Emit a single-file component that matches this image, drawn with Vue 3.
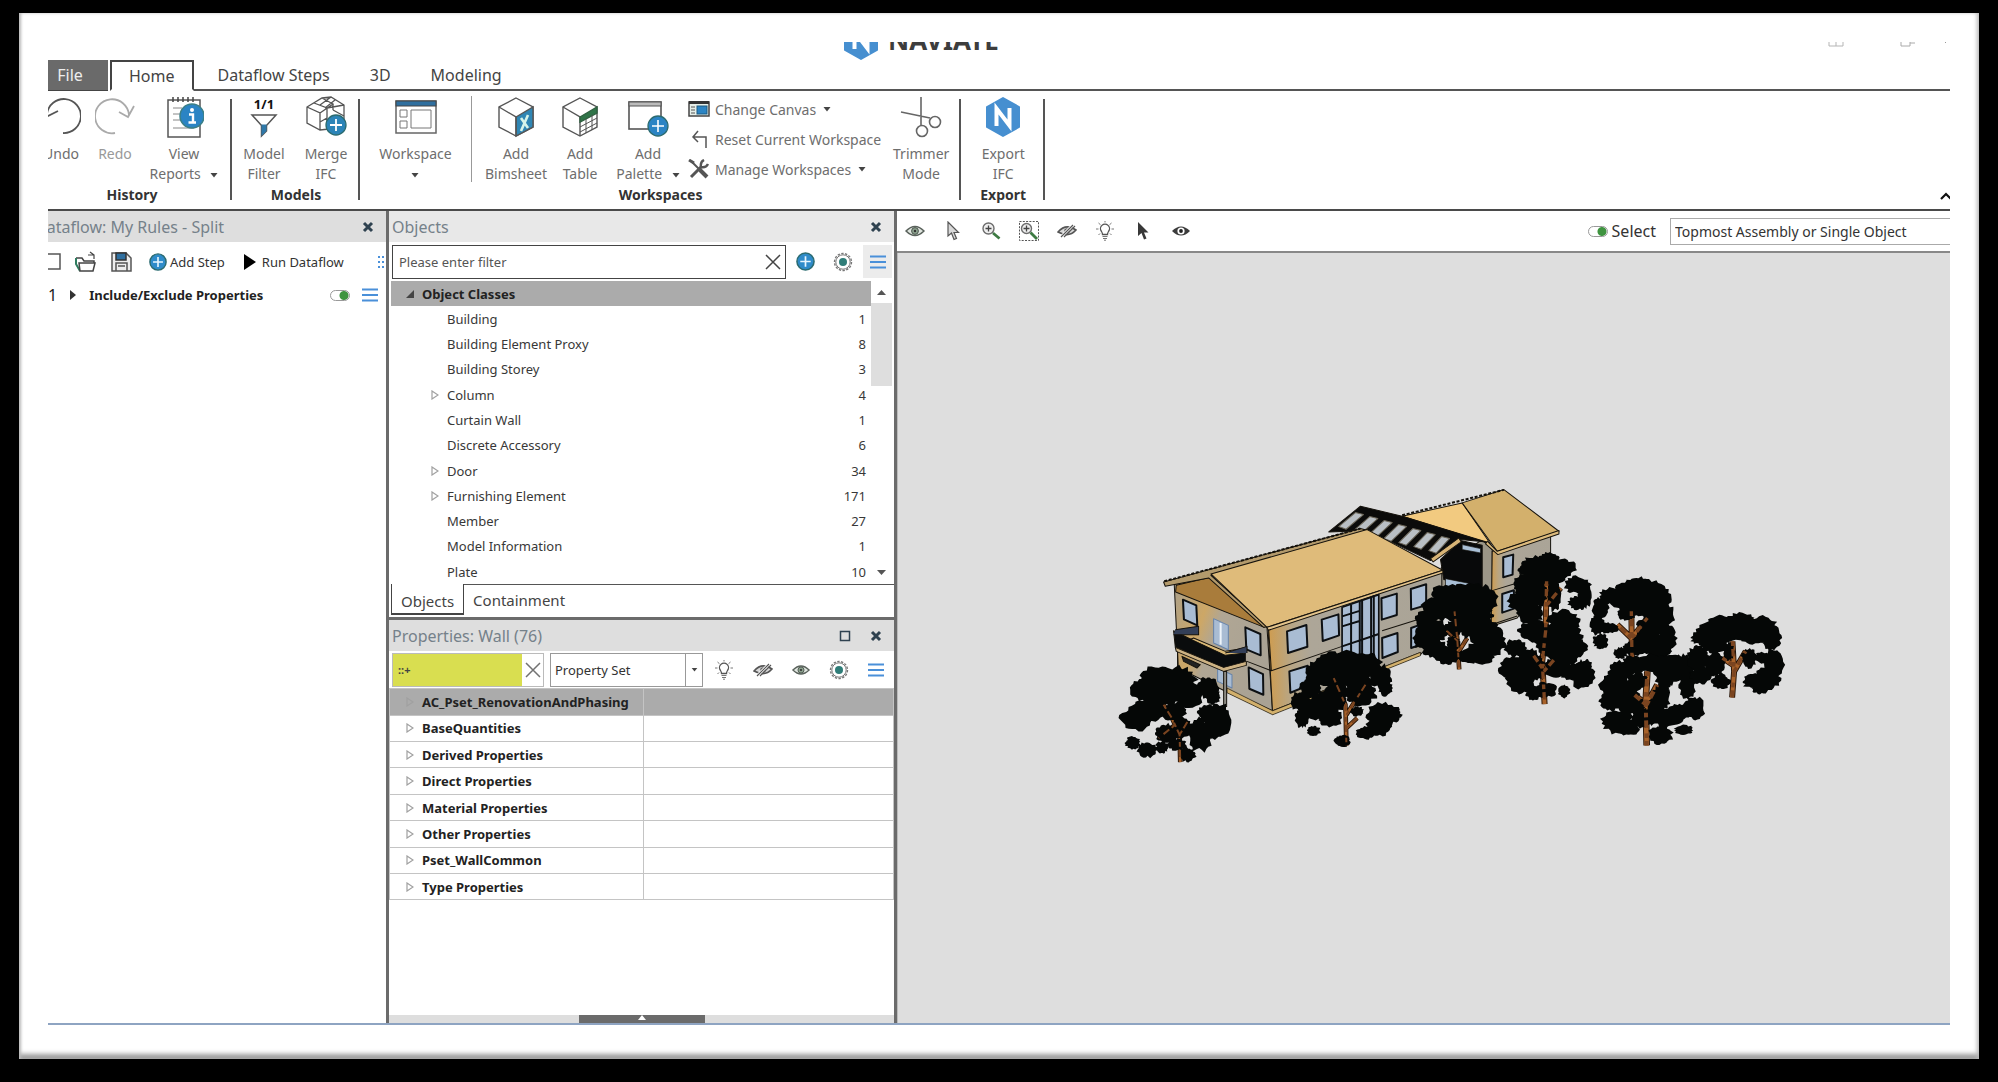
<script setup>
import { ref } from 'vue'

const ribbonTabs = ['Home', 'Dataflow Steps', '3D', 'Modeling']
const activeTab = ref('Home')

const objectClasses = [
  { name: 'Building', count: 1 },
  { name: 'Building Element Proxy', count: 8 },
  { name: 'Building Storey', count: 3 },
  { name: 'Column', count: 4, open: true },
  { name: 'Curtain Wall', count: 1 },
  { name: 'Discrete Accessory', count: 6 },
  { name: 'Door', count: 34, open: true },
  { name: 'Furnishing Element', count: 171, open: true },
  { name: 'Member', count: 27 },
  { name: 'Model Information', count: 1 },
  { name: 'Plate', count: 10 },
]

const propertySets = [
  'AC_Pset_RenovationAndPhasing',
  'BaseQuantities',
  'Derived Properties',
  'Direct Properties',
  'Material Properties',
  'Other Properties',
  'Pset_WallCommon',
  'Type Properties',
]

const viewTools = [
  ['eye', 'Show'],
  ['pointer', 'Pick'],
  ['zoom', 'Zoom in'],
  ['zoombox', 'Zoom to selection'],
  ['eyeoff', 'Hide'],
  ['bulb', 'Highlight'],
  ['pointerdark', 'Select object'],
  ['eyedark', 'Isolate'],
]

const filterText = ref('')
const propertyFilter = ref('::+')

// Leaf clumps: [x, y, rx, ry]; trunks: polylines from crown to ground.
const trees = [
  {
    trunk: 'M190 700L215 740L238 790L240 872M238 790L262 750M225 760L175 800',
    width: 14,
    leaves: [[170, 620, 48, 34], [230, 625, 55, 38], [130, 655, 42, 34], [200, 665, 60, 34], [260, 665, 48, 40], [110, 740, 46, 36], [150, 715, 46, 34], [325, 650, 30, 34], [338, 675, 22, 22], [320, 725, 26, 26], [355, 745, 38, 48], [300, 790, 36, 48], [340, 775, 34, 28], [200, 785, 34, 26], [245, 770, 28, 32], [98, 815, 22, 18], [140, 835, 28, 22], [185, 828, 18, 18], [262, 850, 24, 20], [222, 720, 34, 28], [230, 820, 26, 18]],
  },
  {
    trunk: 'M700 620L735 700L738 822M738 730L795 640M738 770L770 740',
    width: 14,
    leaves: [[690, 575, 45, 34], [745, 575, 55, 34], [800, 580, 42, 34], [650, 605, 36, 34], [700, 620, 44, 30], [840, 615, 34, 34], [855, 650, 20, 24], [760, 620, 50, 30], [630, 650, 32, 30], [600, 690, 30, 28], [650, 710, 40, 36], [690, 690, 42, 40], [605, 740, 20, 28], [690, 740, 34, 26], [780, 665, 46, 34], [715, 660, 26, 30], [850, 730, 48, 34], [880, 730, 22, 20], [835, 765, 36, 28], [795, 785, 28, 18], [640, 778, 20, 14], [725, 808, 24, 18], [770, 720, 20, 14]],
  },
  {
    trunk: 'M1062 420L1070 500L1076 594M1075 540L1100 500M1072 510L1030 470',
    width: 14,
    leaves: [[1040, 370, 45, 30], [1100, 370, 60, 34], [1150, 385, 38, 40], [1020, 410, 52, 36], [1080, 420, 50, 40], [1130, 430, 44, 28], [975, 450, 30, 34], [965, 500, 26, 34], [1010, 480, 30, 30], [1000, 530, 36, 28], [1040, 550, 36, 28], [1150, 480, 42, 44], [1180, 510, 34, 40], [1140, 545, 46, 32], [1105, 555, 28, 22], [1060, 470, 24, 24], [1060, 515, 20, 20], [1100, 470, 20, 30]],
  },
  {
    trunk: 'M1338 330L1335 480L1325 570L1332 698M1330 600L1365 560M1325 590L1290 540M1340 400L1380 350',
    width: 18,
    leaves: [[1310, 280, 46, 24], [1345, 262, 30, 18], [1380, 290, 42, 28], [1340, 310, 60, 26], [1275, 295, 22, 18], [1430, 340, 38, 24], [1450, 370, 22, 42], [1430, 395, 26, 20], [1270, 340, 34, 30], [1265, 390, 40, 34], [1290, 425, 40, 30], [1310, 365, 30, 40], [1360, 375, 20, 44], [1390, 450, 46, 34], [1300, 480, 44, 30], [1400, 500, 44, 36], [1340, 510, 38, 44], [1430, 530, 28, 26], [1245, 530, 32, 26], [1240, 590, 42, 34], [1260, 630, 42, 38], [1300, 590, 34, 40], [1285, 560, 30, 28], [1370, 590, 36, 30], [1390, 550, 46, 32], [1420, 600, 40, 26], [1445, 610, 34, 40], [1455, 590, 20, 24], [1390, 660, 18, 18], [1335, 655, 34, 22], [1300, 665, 24, 20]],
  },
  {
    trunk: 'M1592 420L1594 570M1594 500L1640 440M1592 500L1550 460',
    width: 18,
    leaves: [[1590, 355, 40, 28], [1610, 340, 36, 22], [1640, 360, 48, 34], [1680, 385, 30, 36], [1530, 375, 32, 24], [1570, 385, 40, 28], [1500, 410, 24, 32], [1630, 400, 56, 36], [1690, 430, 30, 36], [1580, 425, 28, 24], [1490, 460, 20, 30], [1500, 510, 22, 22], [1520, 470, 30, 16], [1660, 460, 46, 30], [1640, 510, 40, 40], [1700, 500, 26, 40], [1600, 530, 34, 22], [1560, 545, 20, 16], [1680, 540, 30, 20]],
  },
  {
    trunk: 'M1640 600L1635 690L1638 822M1638 700L1670 640M1636 700L1590 660',
    width: 20,
    leaves: [[1600, 580, 38, 26], [1650, 575, 50, 26], [1710, 580, 46, 32], [1750, 590, 30, 40], [1560, 600, 36, 30], [1535, 640, 36, 34], [1530, 690, 32, 28], [1570, 660, 44, 34], [1610, 630, 30, 26], [1700, 610, 40, 28], [1760, 640, 24, 44], [1780, 710, 30, 34], [1740, 720, 34, 22], [1590, 700, 44, 28], [1550, 750, 46, 34], [1580, 770, 36, 22], [1620, 740, 28, 30], [1680, 680, 28, 38], [1700, 740, 44, 26], [1680, 790, 34, 28], [1750, 775, 28, 14], [1660, 720, 22, 40], [1690, 640, 20, 16]],
  },
  {
    trunk: 'M1895 510L1900 600L1894 678M1900 600L1935 540M1896 580L1865 560',
    width: 18,
    leaves: [[1860, 455, 38, 24], [1920, 450, 40, 24], [1980, 465, 46, 30], [1830, 485, 48, 30], [1800, 500, 28, 20], [2010, 500, 30, 36], [1900, 480, 60, 30], [1960, 495, 40, 22], [1840, 520, 40, 24], [1790, 560, 30, 34], [1800, 610, 32, 26], [1840, 580, 30, 36], [1860, 630, 26, 22], [2020, 580, 28, 44], [2000, 620, 38, 34], [1960, 630, 34, 22], [1945, 560, 22, 30], [1985, 560, 24, 16], [1980, 650, 26, 16], [1885, 540, 16, 26]],
  },
]

function clump([cx, cy, rx, ry], seed) {
  let s = seed * 7919 + cx * 31 + cy * 17
  const next = () => {
    s = (s * 1103515245 + 12345) % 2147483648
    return s / 2147483648
  }
  const steps = 30
  let d = ''
  for (let i = 0; i < steps; i++) {
    const a = (i / steps) * Math.PI * 2
    const k = 0.84 + next() * 0.36
    d += (i ? 'L' : 'M') + Math.round(cx + Math.cos(a) * rx * k) + ' ' + Math.round(cy + Math.sin(a) * ry * k)
  }
  return d + 'Z'
}
const crowns = trees.map((t, i) => ({ ...t, d: t.leaves.map((l) => clump(l, i + 1)).join('') }))

// Window openings as skewed quads.
const leftWindows = [
  'M248 385L288 402L291 462L251 444Z',
  'M435 468L480 488L481 552L438 534Z',
  'M445 588L488 608L489 670L447 652Z',
]
const rightWindows = [
  'M560 480L618 461L621 526L563 545Z',
  'M664 445L714 429L716 492L667 509Z',
  'M843 381L889 367L889 431L844 445Z',
  'M931 353L977 339L977 402L932 415Z',
  'M567 600L622 583L624 642L570 664Z',
  'M845 500L891 485L892 542L846 560Z',
  'M932 470L960 460L960 520L932 530Z',
  'M1208 258L1238 250L1236 310L1208 318Z',
  'M1205 368L1240 357L1240 412L1205 424Z',
]
const rafters = [0, 1, 2, 3, 4, 5, 6].map((i) => {
  const x = 765 + i * 43
  const y = 124 + i * 12
  return `M${x} ${y}L${x + 24} ${y + 6}L${x - 28 + i * 2} ${y + 50}L${x - 50 + i * 2} ${y + 42}Z`
})
</script>

<template>
  <div class="stage">
    <svg class="sprite" aria-hidden="true">
      <symbol id="close" viewBox="0 0 12 12"><path d="M2 2L10 10M10 2L2 10" stroke="#2f4250" stroke-width="3" /></symbol>
      <symbol id="thinx" viewBox="0 0 16 16"><path d="M1 1L15 15M15 1L1 15" stroke="#444" stroke-width="1.5" /></symbol>
      <symbol id="plus" viewBox="0 0 20 20"><circle cx="10" cy="10" r="9" fill="#2f8bc9" stroke="#2b6b70" stroke-width="1.6" /><path d="M10 4.500V15.500M4.500 10H15.500" stroke="#e8f6ff" stroke-width="1.800" /></symbol>
      <symbol id="menu" viewBox="0 0 16 14"><path d="M0 1.500H16M0 7H16M0 12.500H16" stroke="#4a90d9" stroke-width="2.200" /></symbol>
      <symbol id="gear" viewBox="0 0 20 20"><circle cx="10" cy="10" r="8.500" fill="none" stroke="#777" stroke-width="1.400" stroke-dasharray="2.400 1.400" /><circle cx="10" cy="10" r="7.200" fill="none" stroke="#777" /><circle cx="10" cy="10" r="4" fill="#2f7d78" /></symbol>
      <symbol id="eye" viewBox="0 0 20 12"><path d="M1 6Q10 -3 19 6Q10 15 1 6Z" fill="#dfe5df" stroke="#5a625c" stroke-width="1.500" /><circle cx="10" cy="6" r="3.400" fill="#8aa08c" stroke="#4c554e" /><circle cx="10" cy="6" r="1.200" fill="#333" /></symbol>
      <symbol id="eyedark" viewBox="0 0 20 12"><path d="M1 6Q10 -3 19 6Q10 15 1 6Z" fill="#3c3c3c" /><circle cx="10" cy="6" r="3.600" fill="#fff" /><circle cx="10" cy="6" r="1.900" fill="#222" /></symbol>
      <symbol id="eyeoff" viewBox="0 0 20 14"><path d="M1 8Q9 -1 19 6Q12 14 1 8Z" fill="#d8d8d8" stroke="#555" stroke-width="1.600" /><circle cx="10" cy="7" r="2.800" fill="#666" /><path d="M4 13L16 1" stroke="#fff" stroke-width="3" /><path d="M4 13L16 1M7 13L18 2" stroke="#555" stroke-width="1.200" /></symbol>
      <symbol id="bulb" viewBox="0 0 20 20"><path d="M7.500 13.500Q7.500 12 6.500 10.500A4.500 4.500 0 1 1 13.500 10.500Q12.500 12 12.500 13.500Z" fill="none" stroke="#555" stroke-width="1.300" /><path d="M7.500 15.500H12.500M8 17.500H12M9 19.200H11M1 8H3.500M16.500 8H19M3.500 2L5.500 3.800M16.500 2L14.500 3.800M3.500 14L5 12.500M16.500 14L15 12.500M10 0V1.500" stroke="#777" /></symbol>
      <symbol id="pointer" viewBox="0 0 14 20"><path d="M2 1V15L5.500 12L8 18.500L10.500 17.500L8 11.500H12.500Z" fill="#d9d9d9" stroke="#555" stroke-width="1.200" /></symbol>
      <symbol id="pointerdark" viewBox="0 0 14 20"><path d="M2 1V15L5.500 12L8 18.500L10.500 17.500L8 11.500H12.500Z" fill="#383838" /></symbol>
      <symbol id="zoom" viewBox="0 0 20 20"><circle cx="7.500" cy="7.500" r="5.500" fill="#eee" stroke="#6d6d6d" stroke-width="1.400" /><path d="M7.500 4.500V10.500M4.500 7.500H10.500" stroke="#444" stroke-width="1.300" /><path d="M12 12L18.500 17.500" stroke="#3d7a42" stroke-width="2.800" /></symbol>
      <symbol id="zoombox" viewBox="0 0 20 20"><rect x=".5" y=".5" width="19" height="19" fill="none" stroke="#555" stroke-dasharray="2 1.300" /><circle cx="7.500" cy="7.500" r="5" fill="#eee" stroke="#6d6d6d" stroke-width="1.400" /><path d="M7.500 4.500V10.500M4.500 7.500H10.500" stroke="#444" stroke-width="1.300" /><path d="M11.500 11.500L18 18" stroke="#3d7a42" stroke-width="2.800" /></symbol>
      <symbol id="tri" viewBox="0 0 8 10"><path d="M1 1L7 5L1 9Z" fill="none" stroke="#a0a0a0" stroke-width="1.200" /></symbol>
      <symbol id="down" viewBox="0 0 8 5"><path d="M0.500 0H7.500L4 4.500Z" fill="#444" /></symbol>
      <symbol id="hex" viewBox="0 0 36 40"><path d="M18 1L34 10V30L18 39L2 30V10Z" fill="#468fd0" stroke="#468fd0" stroke-width="2" stroke-linejoin="round" /><path d="M11.500 29V11.500L24.500 28.500V11" fill="none" stroke="#fff" stroke-width="4" /></symbol>
    </svg>

    <main class="frame">
      <div class="crop">
        <div class="app">
          <header class="titlebar">
            <div class="brand">
              <svg width="36" height="40"><use href="#hex" /></svg>
              <span>NAVIATE</span>
            </div>
            <div class="winbtns">
              <button aria-label="Minimize"><svg width="16" height="14"><path d="M1 5V13H15V5M8 9V13" fill="none" stroke="#b5b5b5" /></svg></button>
              <button aria-label="Restore"><svg width="16" height="14"><path d="M1 5V13H10V5M10 10H15" fill="none" stroke="#aaa" /></svg></button>
              <button class="shut" aria-label="Close window"><svg width="12" height="14"><path d="M1 10L8 3M8 10L1 3" stroke="#999" /></svg></button>
            </div>
          </header>

          <nav class="tabs">
            <button class="file">File</button>
            <button v-for="t in ribbonTabs" :key="t" :class="['tab', { on: t === activeTab }]" @click="activeTab = t">{{ t }}</button>
            <span class="rule"></span>
          </nav>

          <section class="ribbon">
            <div class="group">
              <div class="tools">
                <button class="tool w-s">
                  <svg width="40" height="42" fill="none" stroke="#555" stroke-width="1.800"><path d="M6 18A17 17 0 1 1 22 37M3 10L5 21L17 15" /></svg>
                  <span>Undo</span>
                </button>
                <button class="tool w-s pale">
                  <svg width="40" height="42" fill="none" stroke="#aaa" stroke-width="1.800"><path d="M20 37A17 17 0 1 1 34 19M24 16L33 21L39 10" /></svg>
                  <span>Redo</span>
                </button>
                <button class="tool w-l">
                  <svg width="40" height="42"><rect x="4" y="4" width="32" height="37" fill="#fff" stroke="#555" stroke-width="1.500" /><path d="M9 1V6M14 1V6M19 1V6M24 1V6M29 1V6" stroke="#444" stroke-width="1.500" /><path d="M9 12H18M9 18H16M9 24H18M9 32H30" stroke="#888" /><circle cx="28" cy="20" r="12" fill="#2b84c4" stroke="#3b7f86" stroke-width="1.500" /><circle cx="28" cy="14" r="2" fill="#fff" /><path d="M25 18.500H29V26M24.500 26.500H32" fill="none" stroke="#fff" stroke-width="2.400" /></svg>
                  <span>View<br />Reports <svg class="car" width="8" height="5"><use href="#down" /></svg></span>
                </button>
              </div>
              <h2>History</h2>
            </div>

            <div class="group">
              <div class="tools">
                <button class="tool w-m">
                  <b class="ratio">1/1</b>
                  <svg width="28" height="26"><path d="M2 3H26L16.500 13.500V19L11.500 24V13.500Z" fill="#fff" stroke="#555" stroke-width="1.500" /><path d="M11.500 12.500H16.500V19L11.500 24Z" fill="#2f78a8" /></svg>
                  <span>Model<br />Filter</span>
                </button>
                <button class="tool w-g">
                  <svg width="42" height="42" fill="none" stroke="#555" stroke-width="1.300"><path d="M2 11L17 2L26 1L39 9V28L24 33L15 34L2 27ZM2 11L15 17V34M15 17L28 8L17 2M9 7L22 12V31M22 12L39 9M28 8V14M15 9L26 1M30 4L20 12M15 26L22 22M28 14L39 20" /><circle cx="31" cy="29" r="10" fill="#2b84b8" stroke="#2b6b70" /><path d="M31 23V35M25 29H37" stroke="#fff" stroke-width="1.800" /></svg>
                  <span>Merge<br />IFC</span>
                </button>
              </div>
              <h2>Models</h2>
            </div>

            <div class="group">
              <div class="tools">
                <button class="tool w-xl thinline">
                  <svg width="42" height="42"><rect x="1" y="5" width="40" height="32" fill="#fff" stroke="#666" stroke-width="1.500" /><rect x="1" y="5" width="40" height="5" fill="#2f6f9f" stroke="#444" /><path d="M5 14H12V21H5ZM5 25H12V32H5ZM16 14H36V32H16Z" fill="none" stroke="#777" /></svg>
                  <span>Workspace<br /><svg class="car alone" width="8" height="5"><use href="#down" /></svg></span>
                </button>
                <button class="tool w-m">
                  <svg width="38" height="42" stroke="#555" stroke-width="1.400"><path d="M19 2L36 11V31L19 40L2 31V11Z" fill="#fff" /><path d="M19 21L36 11V31L19 40Z" fill="#2f86b4" /><path d="M2 11L19 21V40" fill="none" /><path d="M24 22L31 32M31 19L24 35" stroke="#d7f4ea" stroke-width="2.600" /></svg>
                  <span>Add<br />Bimsheet</span>
                </button>
                <button class="tool w-m">
                  <svg width="38" height="42" stroke="#555" stroke-width="1.400"><path d="M19 2L36 11V31L19 40L2 31V11Z" fill="#fff" /><path d="M2 11L19 21V40" fill="none" /><path d="M19 21L36 11V17L19 26Z" fill="#2f7448" stroke="#2f6040" /><path d="M19 31L36 22M19 36L36 27M25 23V37M31 19V34" fill="none" stroke-width="1" /></svg>
                  <span>Add<br />Table</span>
                </button>
                <button class="tool w-p">
                  <svg width="42" height="42"><rect x="2" y="6" width="32" height="27" fill="#fff" stroke="#555" stroke-width="1.600" /><rect x="2" y="6" width="32" height="4" fill="#bbb" stroke="#555" /><circle cx="31" cy="30" r="10" fill="#2b84c4" stroke="#2b6b70" stroke-width="1.300" /><path d="M31 24V36M25 30H37" stroke="#fff" stroke-width="1.600" /></svg>
                  <span>Add<br />Palette <svg class="car" width="8" height="5"><use href="#down" /></svg></span>
                </button>
                <div class="stack">
                  <button>
                    <svg width="22" height="20"><rect x="1" y="3" width="20" height="14" fill="#e6efe9" stroke="#444" stroke-width="1.500" /><rect x="1" y="2" width="20" height="3" fill="#333" /><rect x="9" y="7" width="10" height="8" fill="#2b84c4" stroke="#1d5a80" /><path d="M3 8H7M3 11H7M3 14H7" stroke="#555" /></svg>
                    Change Canvas <svg class="car" width="8" height="5"><use href="#down" /></svg>
                  </button>
                  <button>
                    <svg width="22" height="20" fill="none" stroke="#555" stroke-width="1.500"><path d="M10 2L5 8L10 13M5 8H18V19" /></svg>
                    Reset Current Workspace
                  </button>
                  <button>
                    <svg width="22" height="20" fill="none" stroke="#555"><path d="M3 2L13 12" stroke-width="2" /><path d="M12 11L19 18" stroke-width="4" /><path d="M3 18L14 7" stroke-width="3" /><path d="M16 1Q12 3 13 8Q18 9 20 5" stroke-width="2.400" /><path d="M1 1L6 4" stroke-width="3" /></svg>
                    Manage Workspaces <svg class="car" width="8" height="5"><use href="#down" /></svg>
                  </button>
                </div>
                <button class="tool w-t">
                  <svg width="42" height="42" fill="none" stroke="#666" stroke-width="1.600"><path d="M21 1V30M1 16L30 22" /><circle cx="22" cy="35" r="5.500" /><circle cx="35" cy="26" r="5.500" /></svg>
                  <span>Trimmer<br />Mode</span>
                </button>
              </div>
              <h2>Workspaces</h2>
            </div>

            <div class="group">
              <div class="tools">
                <button class="tool w-e">
                  <svg width="36" height="40"><use href="#hex" /></svg>
                  <span>Export<br />IFC</span>
                </button>
              </div>
              <h2>Export</h2>
            </div>
            <button class="collapse" aria-label="Collapse ribbon"><svg width="12" height="8"><path d="M1 7L6 2L11 7" fill="none" stroke="#111" stroke-width="2.200" /></svg></button>
          </section>

          <div class="work">
            <section class="dataflow">
              <div class="head dark"><h3>Dataflow: My Rules - Split</h3><button aria-label="Close dataflow"><svg width="12" height="12"><use href="#close" /></svg></button></div>
              <div class="dfbar">
                <button aria-label="New"><svg width="20" height="20"><path d="M1 2H18V17H1Z" fill="#fff" stroke="#555" stroke-width="1.500" /></svg></button>
                <button aria-label="Open"><svg width="22" height="22" fill="none" stroke="#444" stroke-width="1.500"><path d="M1 7H7L9 10H19V12" /><path d="M1 7V13L5 20" stroke="#2f7d60" stroke-width="2" /><path d="M4 12H20L18 20H5Z" fill="#fff" /><path d="M13 4H19V8M15 1L19 4" stroke-width="1.200" /></svg></button>
                <button aria-label="Save"><svg width="22" height="22" stroke="#555" stroke-width="1.500"><path d="M2 2H16L21 7V20H2Z" fill="#eee" /><rect x="6" y="2" width="10" height="7" fill="#2f6f9f" stroke="#333" /><path d="M6 20V12H17V20M8 15H15" fill="none" /></svg></button>
                <button class="lbl"><svg width="18" height="18"><use href="#plus" /></svg>Add Step</button>
                <button class="lbl run"><svg width="14" height="18"><path d="M1 1L13 9L1 17Z" fill="#000" /></svg>Run Dataflow</button>
                <button class="dots" aria-label="More"><svg width="6" height="14"><path d="M1 1V3M1 6V8M1 11V13M5 1V3M5 6V8M5 11V13" stroke="#4a90d9" stroke-width="2" /></svg></button>
              </div>
              <div class="step">
                <span class="num">1</span>
                <svg width="8" height="12"><path d="M1 1L7 6L1 11Z" fill="#333" /></svg>
                <b>Include/Exclude Properties</b>
                <input type="checkbox" class="toggle" checked aria-label="Enable step" />
                <button aria-label="Step menu"><svg width="16" height="14"><use href="#menu" /></svg></button>
              </div>
            </section>

            <div class="split"></div>

            <div class="middle">
              <section class="panel">
                <div class="head"><h3>Objects</h3><button aria-label="Close objects"><svg width="12" height="12"><use href="#close" /></svg></button></div>
                <div class="filterbar">
                  <div class="field">
                    <input v-model="filterText" type="text" placeholder="Please enter filter" aria-label="Object filter" />
                    <button aria-label="Clear filter"><svg width="16" height="16"><use href="#thinx" /></svg></button>
                  </div>
                  <button aria-label="Add filter"><svg width="19" height="19"><use href="#plus" /></svg></button>
                  <button aria-label="Settings"><svg width="20" height="20"><use href="#gear" /></svg></button>
                  <button class="shade" aria-label="Menu"><svg width="16" height="14"><use href="#menu" /></svg></button>
                </div>
                <div class="treewrap">
                  <ul class="tree">
                    <li class="root"><svg width="8" height="8"><path d="M8 0V8H0Z" fill="#444" /></svg><b>Object Classes</b></li>
                    <li v-for="o in objectClasses" :key="o.name">
                      <span class="twist"><svg v-if="o.open" width="8" height="10"><use href="#tri" /></svg></span>
                      <span>{{ o.name }}</span><span class="count">{{ o.count }}</span>
                    </li>
                  </ul>
                  <div class="scroll">
                    <svg width="9" height="5"><path d="M0 5H9L4.500 0Z" fill="#555" /></svg>
                    <i class="thumb"></i>
                    <svg width="9" height="5"><path d="M0 0H9L4.500 5Z" fill="#555" /></svg>
                  </div>
                </div>
                <div class="bottomtabs">
                  <button class="on">Objects</button>
                  <button>Containment</button>
                </div>
              </section>

              <div class="hsplit"></div>

              <section class="panel">
                <div class="head dark"><h3>Properties: Wall (76)</h3>
                  <button aria-label="Maximize"><svg width="12" height="12"><rect x="1.500" y="1.500" width="9" height="9" fill="none" stroke="#2f4250" stroke-width="1.500" /></svg></button>
                  <button aria-label="Close properties"><svg width="12" height="12"><use href="#close" /></svg></button>
                </div>
                <div class="propbar">
                  <div class="yellow">
                    <input v-model="propertyFilter" type="text" aria-label="Property filter" />
                    <button aria-label="Clear property filter"><svg width="16" height="16" opacity=".75"><use href="#thinx" /></svg></button>
                  </div>
                  <div class="combo">
                    <select aria-label="Group by"><option>Property Set</option></select>
                    <span><svg width="7" height="4"><use href="#down" /></svg></span>
                  </div>
                  <div class="propicons">
                    <button aria-label="Highlight"><svg width="20" height="20"><use href="#bulb" /></svg></button>
                    <button aria-label="Hide"><svg width="20" height="14"><use href="#eyeoff" /></svg></button>
                    <button aria-label="Show"><svg width="18" height="12"><use href="#eye" /></svg></button>
                    <button aria-label="Settings"><svg width="20" height="20"><use href="#gear" /></svg></button>
                    <button aria-label="Menu"><svg width="16" height="14"><use href="#menu" /></svg></button>
                  </div>
                </div>
                <table class="props">
                  <tbody>
                    <tr v-for="(p, i) in propertySets" :key="p" :class="{ sel: i === 0 }">
                      <th scope="row"><svg width="8" height="10"><use href="#tri" /></svg>{{ p }}</th>
                      <td></td>
                    </tr>
                  </tbody>
                </table>
                <div class="grip"><i><svg width="8" height="5"><path d="M0 5H8L4 0Z" fill="#fff" /></svg></i></div>
              </section>
            </div>

            <div class="split"></div>

            <section class="viewer">
              <div class="viewbar">
                <button v-for="[id, label] in viewTools" :key="id" :aria-label="label"><svg width="20" height="20"><use :href="'#' + id" /></svg></button>
                <label class="pick"><input type="checkbox" class="toggle" checked />Select</label>
                <select aria-label="Selection level"><option>Topmost Assembly or Single Object</option></select>
              </div>
              <div class="canvas">
                <svg viewBox="-606 -654 3225 2307" role="img" aria-label="3D model view" stroke-linejoin="round">
                  <defs>
                    <linearGradient id="wallR"><stop offset="0" stop-color="#cf9c4e" /><stop offset=".13" stop-color="#b8a685" /><stop offset=".25" stop-color="#ada698" /><stop offset="1" stop-color="#aaa497" /></linearGradient>
                    <linearGradient id="wallL" x2="1" y2=".5"><stop offset="0" stop-color="#a89f8d" /><stop offset=".35" stop-color="#cda766" /><stop offset=".5" stop-color="#b0a694" /><stop offset="1" stop-color="#a9a294" /></linearGradient>
                  </defs>
                  <g stroke="#15120c" stroke-width="3">
                    <path d="M1145 205L1175 235V470L1022 430V290Z" fill="#9c9687" />
                    <path d="M1175 240L1350 188V300L1250 440L1172 465Z" fill="url(#wallR)" />
                    <path d="M1175 358L1240 338M1172 460L1250 434" fill="none" />
                    <path d="M1020 265L1080 208L1145 222V350L1030 325Z" fill="#08090a" />
                    <path d="M1035 322L1100 335L1142 350L1140 365L1035 345ZM1085 220L1140 232V245L1085 235Z" fill="#a9bfd6" stroke-width="2" />
                    <path d="M905 135L1085 95L1185 240L1155 213Z" fill="#f2ca80" />
                    <path d="M1085 95L1210 55L1375 180L1190 240Z" fill="#d3b06c" />
                    <path d="M1190 240L1375 178V188L1192 250L1155 218L1160 210Z" fill="#dcba7c" />
                    <path d="M685 182L780 105L905 135L1158 212L1080 205L990 268L800 178Z" fill="#0b0b0a" />
                    <path d="M990 262L1075 200L1082 212L998 272Z" fill="#d8b476" />
                    <path v-for="r in rafters" :key="r" :d="r" fill="#b9bfc4" stroke="#6c6658" stroke-width="3" />
                    <path d="M222 340L332 312L500 470L517 728L380 662L234 590Z" fill="url(#wallL)" />
                    <path d="M503 474L1024 303V480L958 552L517 728Z" fill="url(#wallR)" />
                    <path d="M228 342L330 318L492 468L226 362Z" fill="#a97c3b" />
                    <path d="M190 332L780 172L802 178L332 312L500 466L490 468L325 320L195 345Z" fill="#b39a6c" />
                    <path d="M332 308L800 175L1027 297L500 468Z" fill="#dfbb7a" />
                    <path d="M500 468L1027 297V305L504 477Z" fill="#e3c38a" />
                    <path d="M192 330L780 172" stroke-width="6" stroke-dasharray="9 5" fill="none" />
                    <path d="M905 132L1210 56" stroke-width="6" stroke-dasharray="9 5" fill="none" />
                    <path d="M440 570L513 598L725 525M845 478L955 444M380 655L517 718L960 543M505 475L513 598" fill="none" />
                    <path d="M380 650L517 718L960 543V553L517 730L380 664Z" fill="#d2b06c" stroke-width="2" />
                  </g>
                  <g fill="#a9bcd3" stroke="#0d1013" stroke-width="6">
                    <path v-for="w in leftWindows" :key="w" :d="w" />
                    <path v-for="w in rightWindows" :key="w" :d="w" />
                    <path d="M725 408L835 370V590L725 560Z" stroke-width="5" />
                    <path d="M752 400V560M778 390V570M785 388V570M812 380V580M725 435L780 418M725 465L780 448M725 525L835 488M820 372V580" fill="none" />
                    <path d="M340 442L384 462V535L340 515Z" stroke="#6683aa" stroke-width="3" />
                    <path d="M352 590L395 610V650L352 630Z" stroke="#6683aa" stroke-width="3" />
                    <path d="M361 455V520" stroke="#eef4fa" />
                  </g>
                  <g stroke="#15120c" stroke-width="3">
                    <path d="M280 500L375 540L438 530L395 590L230 520Z" fill="#d9b876" />
                    <path d="M220 478L285 510L375 552L435 545V572L370 590L225 526Z" fill="#0a0c0d" />
                    <path d="M225 475L295 465V490L220 490M375 545L440 525V545" fill="#333f58" />
                    <path d="M225 528L370 588L438 570V582L370 600L228 540Z" fill="#cdb283" />
                    <path d="M245 555L300 580L290 590L250 570Z" fill="#222" />
                    <path d="M232 545V590" fill="none" />
                    <path d="M370 600H379V705H370Z" fill="#8d8b84" />
                  </g>
                  <g v-for="(t, i) in crowns" :key="i">
                    <path :d="t.trunk" fill="none" stroke="#2a1608" :stroke-width="t.width" />
                    <path :d="t.trunk" fill="none" stroke="#a8622a" :stroke-width="t.width - 6" />
                    <path :d="t.d" fill="#050706" />
                    <path :d="t.trunk" fill="none" stroke="#7a4420" :stroke-width="t.width - 8" stroke-dasharray="14 9 22 17" />
                  </g>
                </svg>
              </div>
            </section>
          </div>
        </div>
      </div>
    </main>
  </div>
</template>

<style>
body { margin: 0; background: #000; }
</style>

<style scoped>
* { box-sizing: border-box; }
.stage { min-height: 100vh; display: flex; background: #000; padding: 13px 19px 25px; font-family: "Noto Sans", "Open Sans", sans-serif; font-size: 14px; color: #444; }
.sprite { position: absolute; width: 0; height: 0; }
svg { flex: none; display: block; }
button { border: 0; background: none; padding: 0; margin: 0; font: inherit; color: inherit; display: flex; align-items: center; justify-content: center; white-space: nowrap; }
h2, h3, ul { margin: 0; padding: 0; font-weight: 400; }
input, select { font: inherit; color: inherit; margin: 0; border: 0; background: none; outline: 0; min-width: 0; border-radius: 0; }
select { appearance: none; }

.frame { flex: 1; min-width: 0; display: flex; background: #fff; padding: 29px 29px 34px; box-shadow: inset 3px 0 3px -1px #bbb, inset -3px 0 4px -1px #bbb, inset 0 -7px 5px -2px #999; }
.crop { flex: 1; min-width: 0; overflow: hidden; display: flex; border-bottom: 2px solid #8ea4c2; }
.app { flex: 1; min-width: 0; margin: 0 -24px 0 -16px; display: flex; flex-direction: column; }

.titlebar { height: 18px; flex: none; display: flex; align-items: flex-end; justify-content: flex-end; position: relative; }
.brand { position: absolute; left: 811px; bottom: 0; height: 40px; display: flex; align-items: center; gap: 9px; font-size: 26px; line-height: 34px; font-weight: 700; color: #3d3d3d; }
.winbtns { display: flex; gap: 56px; padding: 0 18px 13px 0; }
.winbtns .shut { margin-left: -28px; }

.tabs { flex: none; height: 31px; display: flex; font-size: 16px; }
.file { width: 76px; background: #6a6a6a; color: #eee; border-bottom: 1px solid #444; }
.tab { padding: 0 20px; border-bottom: 2px solid #555; }
.file { box-shadow: 2px 0 #fff; margin-right: 2px; }
.tab.on { padding: 0 17px; border: 2px solid #444; border-bottom-color: #fff; }
.tab.on + .tab { padding-left: 24px; }
.rule { flex: 1; border-bottom: 2px solid #555; }

.ribbon { flex: none; height: 120px; display: flex; border-bottom: 2px solid #4a4a4a; padding: 5px 0 4px; color: #6e6e6e; }
.group { display: flex; flex-direction: column; position: relative; }
.group::after { content: ""; position: absolute; right: 0; top: 3px; bottom: 5px; width: 2px; background: #555; }
.group h2 { text-align: center; font-size: 14px; line-height: 20px; font-weight: 700; color: #333; }
.tools { display: flex; flex: 1; }
.tool { flex-direction: column; justify-content: flex-start; line-height: 20px; text-align: center; }
.tool > svg { height: 42px; }
.tool > span { padding-top: 6px; }
.car { display: inline-block; vertical-align: middle; margin-left: 6px; }
.car.alone { margin-left: 0; }
.w-s { width: 50px; margin-left: 4px; }
.w-l { width: 88px; margin-right: 4px; }
.w-m { width: 64px; }
.w-g { width: 60px; margin-right: 4px; }
.w-p { width: 72px; }
.w-xl { width: 112px; }
.w-t { width: 80px; }
.w-e { width: 84px; }
.pale { color: #999; }
.ratio { font-size: 13px; line-height: 16px; color: #111; }
.tool > .ratio + svg { height: 26px; }
.thinline { border-right: 1px solid #999; margin-right: 12px; height: 86px; }
.stack { display: flex; flex-direction: column; gap: 10px; padding: 3px 0 0 4px; }
.stack button { justify-content: flex-start; gap: 5px; height: 20px; }
.stack .car { margin-left: 2px; }
.collapse { margin-left: auto; align-self: flex-end; padding: 0 22px 5px 0; }

.work { flex: 1; min-height: 0; display: grid; grid-template-columns: 354px 3px 505px 3px minmax(0, 1fr); }
.split, .hsplit { background: #6b6b6b; }
.head { height: 31px; flex: none; display: flex; align-items: center; gap: 19px; background: #e8e8e8; padding: 0 12px 0 3px; color: #75818a; }
.head.dark { background: #dedede; }
.head h3 { flex: 1; font-size: 16px; }

.dataflow { color: #333; display: flex; flex-direction: column; }
.dfbar { height: 40px; display: flex; align-items: center; padding: 0 2px 0 10px; gap: 13px; }
.lbl { gap: 3px; font-size: 13px; margin-left: 4px; }
.run { gap: 5px; margin-left: 5px; }
.dots { margin-left: auto; }
.step { height: 26px; display: flex; align-items: center; gap: 12px; padding: 0 8px 0 16px; font-size: 14px; color: #222; }
.step b { flex: 1; font-size: 13px; white-space: nowrap; }
.num { font-size: 16px; }
.toggle { appearance: none; width: 20px; height: 11px; border: 1px solid #999; border-radius: 6px; background: radial-gradient(circle at 13px 50%, #3f9440 4px, #fff 5px); flex: none; }

.middle { display: grid; grid-template-rows: 101fr 3px 100fr; min-height: 0; }
.panel { display: flex; flex-direction: column; min-height: 0; }
.filterbar { display: flex; align-items: center; height: 39px; padding: 0 2px 0 3px; }
.filterbar > button { width: 38px; height: 33px; }
.filterbar .shade { width: 29px; background: #ececec; margin-left: 1px; }
.field { flex: 1; display: flex; height: 34px; border: 1px solid #444; padding-right: 4px; }
.field input { flex: 1; padding: 0 6px; font-size: 13px; }
.field input::placeholder { color: #555; opacity: 1; }
.field button { width: 16px; }
.treewrap { flex: 1; min-height: 0; display: flex; padding: 0 2px; }
.tree { flex: 1; list-style: none; display: grid; grid-auto-rows: 1fr; font-size: 13px; color: #383838; }
.tree li { display: flex; align-items: center; padding-right: 5px; min-height: 0; line-height: 20px; }
.tree .root { background: #ababab; padding-left: 15px; gap: 8px; color: #222; }
.twist { width: 56px; padding-left: 40px; }
.count { margin-left: auto; }
.scroll { width: 21px; display: flex; flex-direction: column; align-items: center; padding: 9px 0; }
.thumb { width: 21px; height: 83px; background: #dedede; margin: 8px 0 auto; }
.bottomtabs { height: 33px; flex: none; display: flex; font-size: 15px; padding: 0 0 2px 2px; }
.bottomtabs button { flex: none; padding: 0 9px; border-top: 1px solid #555; align-items: flex-start; line-height: 30px; }
.bottomtabs .on { border: solid #444; border-width: 0 1px 2px; line-height: 35px; }
.bottomtabs::after { content: ""; flex: 1; border-top: 1px solid #555; }

.propbar { display: flex; height: 37px; align-items: center; padding: 0 3px; }
.yellow { display: flex; width: 152px; height: 34px; border: 1px solid #bbb; }
.yellow input { flex: 1; background: #d9de50; padding: 0 5px; font-size: 11px; font-weight: 700; }
.yellow button { width: 21px; }
.combo { display: flex; width: 153px; height: 34px; border: 1px solid #999; margin-left: 6px; }
.combo select { flex: 1; padding: 0 4px; font-size: 13px; color: #333; }
.combo span { width: 17px; border-left: 1px solid #999; display: flex; align-items: center; justify-content: center; }
.propicons { flex: 1; display: flex; justify-content: space-between; padding: 0 7px 0 11px; }
.props { border-collapse: collapse; height: 212px; table-layout: fixed; width: 100%; font-size: 13px; color: #222; }
.props th, .props td { padding: 0; border: 1px solid #c4c4c4; }
.props th { width: 254px; text-align: left; line-height: 20px; white-space: nowrap; padding-left: 16px; }
.props th svg { display: inline-block; margin-right: 8px; }
.sel { background: #ababab; }
.grip { margin-top: auto; height: 8px; background: #dedede; display: flex; justify-content: center; }
.grip i { width: 126px; background: #6b6b6b; display: flex; justify-content: center; align-items: flex-start; }

.viewer { display: flex; flex-direction: column; min-height: 0; min-width: 0; }
.viewbar { flex: none; height: 42px; border-bottom: 2px solid #888; display: flex; align-items: center; padding-left: 8px; gap: 18px; color: #333; }
.viewbar select { width: 304px; height: 27px; border: 1px solid #aaa; font-size: 14px; padding: 0 4px; margin-left: -4px; }
.pick { margin-left: auto; display: flex; align-items: center; gap: 4px; font-size: 16px; }
.canvas { flex: 1; min-height: 0; background: #dedede; border-left: 1px solid #bbb; display: flex; }
.canvas svg { flex: 1; min-width: 0; width: 100%; height: 100%; }
</style>
